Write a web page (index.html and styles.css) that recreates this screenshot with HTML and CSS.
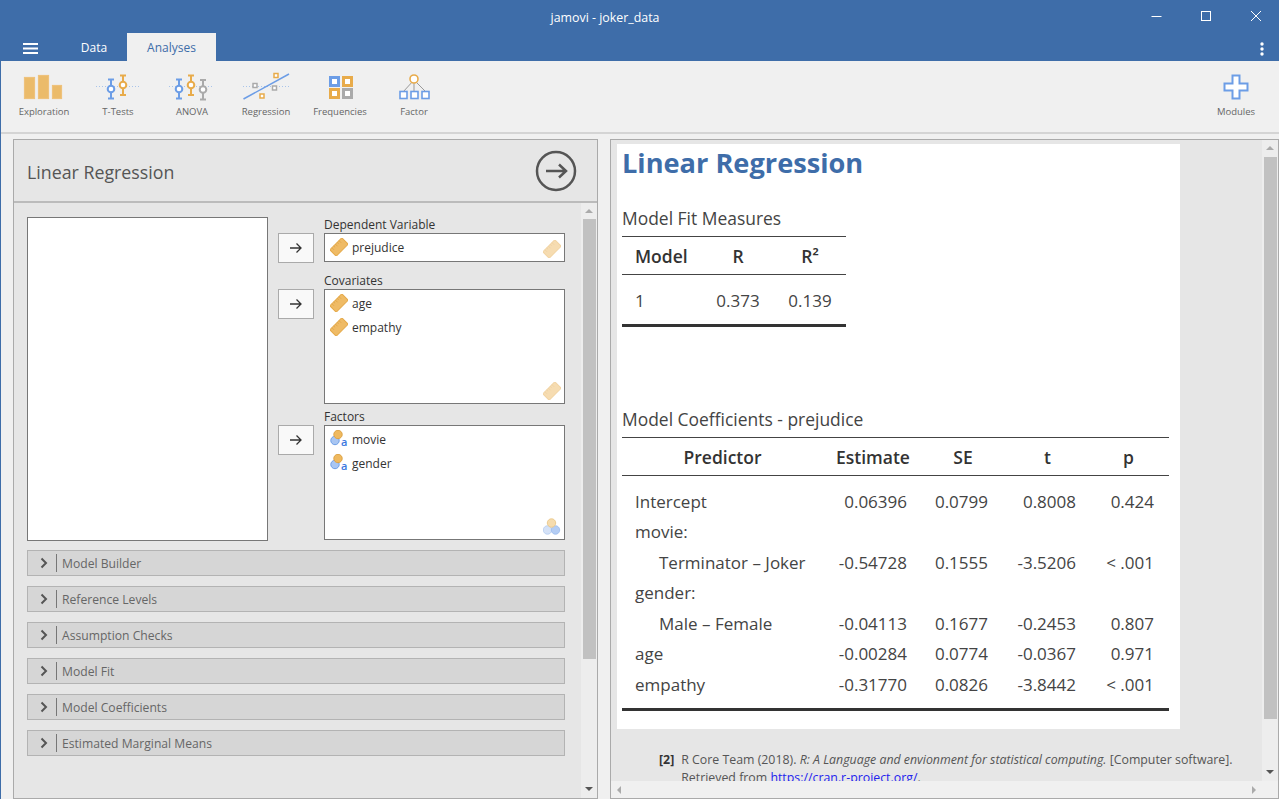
FILE: index.html
```html
<!DOCTYPE html>
<html lang="en">
<head>
    <meta charset="UTF-8">
    <title>jamovi - joker_data</title>
    <link rel="stylesheet" href="styles.css">
</head>
<body>
    <svg class="defs" width="0" height="0">
        <symbol id="ruler" viewBox="0 0 18 18">
            <g transform="rotate(-45 9 9)">
                <rect x="0.5" y="4.5" width="17" height="9" fill="#efbb66" stroke="#e5a948"/>
                <path d="M3.5 4.5v3M6 4.5v2M8.5 4.500v3M11 4.5v2M13.5 4.5v3" stroke="#d99b3a" stroke-width="0.6" fill="none"/>
            </g>
        </symbol>
        <symbol id="nominal" viewBox="0 0 18 18">
            <circle cx="5" cy="10.5" r="4.2" fill="#a9c6f2" stroke="#6f9fe6"/>
            <circle cx="8" cy="4.5" r="4.2" fill="#efb95f" stroke="#dda345"/>
            <text x="11" y="16" class="nominal-a">a</text>
        </symbol>
        <symbol id="nominal-faded" viewBox="0 0 18 18">
            <circle cx="4.5" cy="12" r="4.2" fill="#d5e2f7" stroke="#bcd2f3"/>
            <circle cx="12.5" cy="12" r="4.2" fill="#b4cdf4" stroke="#a3c1f0"/>
            <circle cx="8.5" cy="5" r="4.2" fill="#f6dcae" stroke="#eccb90"/>
        </symbol>
        <symbol id="arrow" viewBox="0 0 14 12">
            <path d="M1 6h11M7.5 1.500L12 6l-4.500 4.500" fill="none" stroke="#333" stroke-width="1.300"/>
        </symbol>
        <symbol id="chevron" viewBox="0 0 8 12">
            <path d="M1.500 1.500L6 6l-4.500 4.500" fill="none" stroke="#555" stroke-width="2"/>
        </symbol>
    </svg>

    <header class="titlebar">
        <div class="app-title">jamovi - joker_data</div>
        <div class="win-controls">
            <svg width="150" height="33" viewBox="0 0 150 33">
                <path d="M22.500 16.500h10" stroke="#fff" fill="none"/>
                <rect x="72.500" y="11.500" width="9" height="9" stroke="#fff" fill="none"/>
                <path d="M122 11l10 10M132 11l-10 10" stroke="#fff" fill="none"/>
            </svg>
        </div>
    </header>

    <nav class="tabbar">
        <svg class="hamburger" width="15" height="11" viewBox="0 0 15 11">
            <path d="M0 1h15M0 5.500h15M0 10h15" stroke="#fff" stroke-width="2"/>
        </svg>
        <div class="tab">Data</div>
        <div class="tab tab-active">Analyses</div>
        <svg class="dots" width="4" height="14" viewBox="0 0 4 14">
            <circle cx="2" cy="2" r="1.700" fill="#fff"/>
            <circle cx="2" cy="7" r="1.700" fill="#fff"/>
            <circle cx="2" cy="12" r="1.700" fill="#fff"/>
        </svg>
    </nav>

    <div class="ribbon">
        <div class="tool">
            <svg width="60" height="30" viewBox="0 0 60 30">
                <g fill="#ebbb6a" stroke="#eec27c" stroke-width="1.200">
                    <rect x="10.500" y="6.500" width="10" height="21"/>
                    <rect x="24.500" y="4.500" width="10" height="23"/>
                    <rect x="38.500" y="14.500" width="9" height="13"/>
                </g>
            </svg>
            <span>Exploration</span>
        </div>
        <div class="tool">
            <svg width="60" height="30" viewBox="0 0 60 30">
                <path d="M8 15.500h45" stroke="#a9c4ea" stroke-dasharray="1 2" fill="none"/>
                <g fill="#fff" stroke-width="2">
                    <g stroke="#6c9de6">
                        <path d="M23 8v20M20 8.500h6M20 27.500h6" fill="none"/>
                        <circle cx="23" cy="18" r="3.300"/>
                    </g>
                    <g stroke="#e8ab4a">
                        <path d="M35 4.500v20M32 4.500h6M32 24h6" fill="none"/>
                        <circle cx="35" cy="14" r="3.300"/>
                    </g>
                </g>
            </svg>
            <span>T-Tests</span>
        </div>
        <div class="tool">
            <svg width="60" height="30" viewBox="0 0 60 30">
                <path d="M7 15.500h45" stroke="#a9c4ea" stroke-dasharray="1 2" fill="none"/>
                <g fill="#fff" stroke-width="2">
                    <g stroke="#6c9de6">
                        <path d="M17 8v20M14 8.500h6M14 27.500h6" fill="none"/>
                        <circle cx="17" cy="18" r="3.300"/>
                    </g>
                    <g stroke="#e8ab4a">
                        <path d="M29 4.500v20M26 4.500h6M26 24h6" fill="none"/>
                        <circle cx="29" cy="14" r="3.300"/>
                    </g>
                    <g stroke="#aaa">
                        <path d="M41 9v20M38 9h6M38 28.500h6" fill="none"/>
                        <circle cx="41" cy="18.500" r="3.300"/>
                    </g>
                </g>
            </svg>
            <span>ANOVA</span>
        </div>
        <div class="tool">
            <svg width="60" height="30" viewBox="0 0 60 30">
                <path d="M7 15.500h47" stroke="#a9c4ea" stroke-dasharray="1 2" fill="none"/>
                <path d="M7.500 28L53 3" stroke="#6c9de6" stroke-width="1.500" fill="none"/>
                <g fill="#fff" stroke-width="1.500">
                    <rect x="17" y="12.500" width="4" height="4" stroke="#aaa"/>
                    <rect x="36.500" y="15" width="4" height="4" stroke="#aaa"/>
                    <rect x="38" y="2.500" width="4" height="4" stroke="#e8ab4a"/>
                    <rect x="24" y="23" width="4" height="4" stroke="#e8ab4a"/>
                </g>
            </svg>
            <span>Regression</span>
        </div>
        <div class="tool">
            <svg width="60" height="30" viewBox="0 0 60 30">
                <g fill="#fff" stroke-width="3">
                    <rect x="20.500" y="6.500" width="8" height="8" stroke="#6c9de6"/>
                    <rect x="33.500" y="6.500" width="8" height="8" stroke="#e8ab4a"/>
                    <rect x="20.500" y="18.500" width="8" height="8" stroke="#e8ab4a"/>
                    <rect x="33.500" y="18.500" width="8" height="8" stroke="#aaa"/>
                </g>
            </svg>
            <span>Frequencies</span>
        </div>
        <div class="tool">
            <svg width="60" height="30" viewBox="0 0 60 30">
                <path d="M30 9L19 21M30 9v12M30 9l12 12" stroke="#999" fill="none"/>
                <circle cx="30" cy="8" r="4" fill="#fff" stroke="#e8ab4a" stroke-width="1.600"/>
                <g fill="#fff" stroke="#6c9de6" stroke-width="1.600">
                    <rect x="16" y="20.500" width="7" height="7"/>
                    <rect x="27" y="20.500" width="7" height="7"/>
                    <rect x="38" y="20.500" width="7" height="7"/>
                </g>
            </svg>
            <span>Factor</span>
        </div>
        <div class="tool tool-end">
            <svg width="60" height="30" viewBox="0 0 60 30">
                <path d="M26.500 4.500h7v8h8v7h-8v8h-7v-8h-8v-7h8z" fill="#fff" stroke="#6c9de6" stroke-width="2"/>
            </svg>
            <span>Modules</span>
        </div>
    </div>

    <main class="workspace">
        <section class="options">
            <div class="options-head">
                <h2>Linear Regression</h2>
                <svg class="run-arrow" width="42" height="42" viewBox="0 0 42 42">
                    <circle cx="21" cy="21" r="19" fill="none" stroke="#555" stroke-width="2.500"/>
                    <path d="M11 21h20M24 14.500L31 21l-7 6.500" fill="none" stroke="#555" stroke-width="2.500"/>
                </svg>
            </div>
            <div class="options-body">
                <div class="options-scroll">
                    <div class="var-picker">
                        <div class="var-source"></div>
                        <div class="var-targets">
                            <div class="var-row var-row-first">
                                <button class="move"><svg width="14" height="12"><use href="#arrow"/></svg></button>
                                <div class="var-group">
                                    <label>Dependent Variable</label>
                                    <div class="var-box var-box-single">
                                        <div class="var-item"><svg width="18" height="18"><use href="#ruler"/></svg>prejudice</div>
                                        <svg class="hint hint-ruler" width="18" height="18"><use href="#ruler"/></svg>
                                    </div>
                                </div>
                            </div>
                            <div class="var-row">
                                <button class="move"><svg width="14" height="12"><use href="#arrow"/></svg></button>
                                <div class="var-group">
                                    <label>Covariates</label>
                                    <div class="var-box var-box-multi">
                                        <div class="var-item"><svg width="18" height="18"><use href="#ruler"/></svg>age</div>
                                        <div class="var-item"><svg width="18" height="18"><use href="#ruler"/></svg>empathy</div>
                                        <svg class="hint hint-ruler" width="18" height="18"><use href="#ruler"/></svg>
                                    </div>
                                </div>
                            </div>
                            <div class="var-row">
                                <button class="move"><svg width="14" height="12"><use href="#arrow"/></svg></button>
                                <div class="var-group">
                                    <label>Factors</label>
                                    <div class="var-box var-box-multi">
                                        <div class="var-item"><svg width="18" height="18"><use href="#nominal"/></svg>movie</div>
                                        <div class="var-item"><svg width="18" height="18"><use href="#nominal"/></svg>gender</div>
                                        <svg class="hint" width="18" height="18"><use href="#nominal-faded"/></svg>
                                    </div>
                                </div>
                            </div>
                        </div>
                    </div>
                    <div class="section-bar"><svg width="8" height="12"><use href="#chevron"/></svg><span>Model Builder</span></div>
                    <div class="section-bar"><svg width="8" height="12"><use href="#chevron"/></svg><span>Reference Levels</span></div>
                    <div class="section-bar"><svg width="8" height="12"><use href="#chevron"/></svg><span>Assumption Checks</span></div>
                    <div class="section-bar"><svg width="8" height="12"><use href="#chevron"/></svg><span>Model Fit</span></div>
                    <div class="section-bar"><svg width="8" height="12"><use href="#chevron"/></svg><span>Model Coefficients</span></div>
                    <div class="section-bar"><svg width="8" height="12"><use href="#chevron"/></svg><span>Estimated Marginal Means</span></div>
                </div>
                <div class="vscroll vscroll-options">
                    <i class="arrow-up"></i>
                    <div class="thumb"></div>
                    <i class="arrow-down"></i>
                </div>
            </div>
        </section>

        <section class="results">
            <div class="results-top">
                <div class="results-view">
                    <div class="paper">
                        <h1>Linear Regression</h1>
                        <h3 class="fit-title">Model Fit Measures</h3>
                        <table class="fit-table">
                            <thead>
                                <tr><th class="left">Model</th><th>R</th><th>R²</th></tr>
                            </thead>
                            <tbody>
                                <tr><td class="left">1</td><td>0.373</td><td>0.139</td></tr>
                            </tbody>
                        </table>
                        <h3 class="coef-title">Model Coefficients - prejudice</h3>
                        <table class="coef-table">
                            <colgroup>
                                <col class="c-pred"><col class="c-est"><col class="c-se"><col class="c-t"><col class="c-p">
                            </colgroup>
                            <thead>
                                <tr><th>Predictor</th><th>Estimate</th><th>SE</th><th>t</th><th>p</th></tr>
                            </thead>
                            <tbody>
                                <tr><td>Intercept</td><td>0.06396</td><td>0.0799</td><td>0.8008</td><td>0.424</td></tr>
                                <tr><td>movie:</td><td></td><td></td><td></td><td></td></tr>
                                <tr><td class="indent">Terminator – Joker</td><td>-0.54728</td><td>0.1555</td><td>-3.5206</td><td>&lt; .001</td></tr>
                                <tr><td>gender:</td><td></td><td></td><td></td><td></td></tr>
                                <tr><td class="indent">Male – Female</td><td>-0.04113</td><td>0.1677</td><td>-0.2453</td><td>0.807</td></tr>
                                <tr><td>age</td><td>-0.00284</td><td>0.0774</td><td>-0.0367</td><td>0.971</td></tr>
                                <tr><td>empathy</td><td>-0.31770</td><td>0.0826</td><td>-3.8442</td><td>&lt; .001</td></tr>
                            </tbody>
                        </table>
                    </div>
                    <div class="reference">
                        <b>[2]</b>
                        <p>R Core Team (2018). <em>R: A Language and envionment for statistical computing.</em> [Computer software]. Retrieved from <a href="#">https://cran.r-project.org/</a>.</p>
                    </div>
                </div>
                <div class="vscroll vscroll-results">
                    <i class="arrow-up"></i>
                    <div class="thumb"></div>
                    <i class="arrow-down"></i>
                </div>
            </div>
            <div class="hscroll">
                <i class="arrow-left"></i>
                <i class="arrow-right"></i>
            </div>
        </section>
    </main>
</body>
</html>
```

FILE: styles.css
```css
html, body {
    margin: 0;
    height: 100%;
}

body {
    width: 1279px;
    height: 799px;
    overflow: hidden;
    background-color: #f0f0f0;
    font-family: "Open Sans", "Noto Sans", sans-serif;
    color: #333;
    display: flex;
    flex-direction: column;
    border-left: 1px solid #3e6da9;
    box-sizing: border-box;
}

.defs {
    position: absolute;
}

.nominal-a {
    font-size: 11px;
    font-weight: 600;
    fill: #3b78e0;
}

/* title and tabs */
.titlebar {
    height: 33px;
    background-color: #3e6da9;
    display: flex;
    color: white;
    margin-left: -1px;
}

.app-title {
    flex: 1;
    padding-left: 81px;
    text-align: center;
    font-size: 12.4px;
    line-height: 35px;
}

.win-controls {
    width: 150px;
}

.tabbar {
    height: 28px;
    background-color: #3e6da9;
    display: flex;
    align-items: stretch;
    margin-left: -1px;
}

.hamburger {
    margin: 10px 16px 0 23px;
}

.tab {
    width: 66px;
    padding-left: 7px;
    text-align: center;
    color: white;
    font-size: 12px;
    line-height: 29px;
}

.tab-active {
    width: 89px;
    padding-left: 0;
    background-color: #f0f0f0;
    color: #3e6da9;
}

.dots {
    margin: 9px 15px 0 auto;
}

/* ribbon */
.ribbon {
    height: 73px;
    display: flex;
    padding-left: 6px;
    border-bottom: 2px solid #d4d4d4;
    box-sizing: border-box;
}

.tool {
    width: 74px;
    display: flex;
    flex-direction: column;
    align-items: center;
    padding-top: 10px;
    font-size: 9.5px;
    color: #666;
}

.tool span {
    line-height: 14px;
    margin-top: 4px;
}

.tool-end {
    margin-left: auto;
    margin-right: 6px;
}

/* main area */
.workspace {
    flex: 1;
    display: flex;
    min-height: 0;
    padding: 5px 0 0 12px;
}

.options {
    width: 585px;
    border: 1px solid #aaa;
    background-color: #e6e6e6;
    display: flex;
    flex-direction: column;
    box-sizing: border-box;
}

.options-head {
    height: 61px;
    border-bottom: 2px solid #bbb;
    display: flex;
    align-items: center;
    justify-content: space-between;
    padding: 0 20px 0 13px;
    flex-shrink: 0;
}

.options-head h2 {
    margin: 0;
    padding-top: 2px;
    font-size: 17.8px;
    font-weight: 400;
    color: #555;
}

.options-body {
    flex: 1;
    display: flex;
    min-height: 0;
}

.options-scroll {
    flex: 1;
    padding: 14px 16px 0 13px;
}

.var-picker {
    display: flex;
    gap: 10px;
    margin-bottom: 9px;
}

.var-source {
    width: 241px;
    height: 324px;
    background-color: white;
    border: 1px solid #777;
    box-sizing: border-box;
}

.var-targets {
    flex: 1;
    display: flex;
    flex-direction: column;
    gap: 5px;
}

.var-row {
    display: flex;
    gap: 10px;
}

.var-row-first {
    margin-bottom: 5px;
}

.move {
    width: 36px;
    height: 30px;
    margin-top: 16px;
    padding: 0;
    background-color: #f9f9f9;
    border: 1px solid #aaa;
    display: flex;
    align-items: center;
    justify-content: center;
}

.var-group {
    flex: 1;
}

.var-group label {
    display: block;
    height: 16px;
    font-size: 12px;
    line-height: 16px;
    color: #333;
}

.var-box {
    position: relative;
    background-color: white;
    border: 1px solid #777;
    box-sizing: border-box;
    padding-top: 1px;
}

.var-box-single {
    height: 29px;
}

.var-box-multi {
    height: 115px;
}

.var-item {
    height: 24px;
    display: flex;
    align-items: center;
    gap: 3px;
    padding-left: 5px;
    font-size: 12px;
    color: #333;
}

.var-item svg {
    margin-right: 1px;
}

.hint {
    position: absolute;
    right: 3px;
    bottom: 3px;
}

.hint-ruler {
    opacity: 0.5;
}

.section-bar {
    height: 26px;
    margin-bottom: 10px;
    background-color: #d6d6d6;
    border: 1px solid #b3b3b3;
    box-sizing: border-box;
    display: flex;
    align-items: center;
    padding-left: 12px;
    font-size: 12.15px;
    color: #666;
}

.section-bar span {
    margin-left: 8px;
    padding-left: 5px;
    height: 18px;
    line-height: 20px;
    border-left: 1px solid #777;
}

/* scrollbars */
.vscroll {
    width: 16px;
    display: flex;
    flex-direction: column;
    align-items: center;
    background-color: #ededed;
    flex-shrink: 0;
}

.thumb {
    width: 13px;
    background-color: #c1c1c1;
}

.vscroll-options .thumb {
    height: 440px;
    margin-top: 6px;
}

.vscroll-results .thumb {
    height: 562px;
    margin-top: 7px;
}

.arrow-up, .arrow-down, .arrow-left, .arrow-right {
    display: block;
    width: 0;
    height: 0;
    border-style: solid;
    border-color: transparent;
}

.arrow-up {
    margin-top: 6px;
    border-width: 0 4px 4px;
    border-bottom-color: #aaa;
}

.arrow-down {
    margin-top: auto;
    margin-bottom: 7px;
    border-width: 4px 4px 0;
    border-top-color: #555;
}

.arrow-left {
    border-width: 4px 4px 4px 0;
    border-right-color: #aaa;
}

.arrow-right {
    border-width: 4px 0 4px 4px;
    border-left-color: #aaa;
}

/* results */
.results {
    margin-left: 12px;
    flex: 1;
    border: 1px solid #aaa;
    background-color: #e6e6e6;
    display: flex;
    flex-direction: column;
    min-height: 0;
    min-width: 0;
}

.results-top {
    flex: 1;
    display: flex;
    min-height: 0;
}

.results-view {
    flex: 1;
    overflow: hidden;
    min-width: 0;
}

.hscroll {
    height: 17px;
    background-color: #f0f0f0;
    display: flex;
    align-items: center;
    justify-content: space-between;
    padding: 0 22px 0 6px;
    flex-shrink: 0;
}

.paper {
    width: 563px;
    height: 585px;
    margin: 4px 0 0 6px;
    padding: 0 5px;
    box-sizing: border-box;
    background-color: white;
    overflow: hidden;
}

.paper h1 {
    margin: 0;
    height: 38px;
    font-size: 27.2px;
    font-weight: 700;
    line-height: 38px;
    color: #3e6da9;
}

.paper h3 {
    margin: 0;
    font-size: 17.45px;
    font-weight: 400;
    line-height: 24px;
    color: #444;
}

.paper .fit-title {
    margin-top: 24px;
    height: 30px;
}

.paper .coef-title {
    margin-top: 80px;
    height: 30px;
}

table {
    border-collapse: collapse;
    font-size: 17px;
    color: #444;
}

th {
    font-size: 17.5px;
    font-weight: 600;
    color: #333;
    height: 37px;
    padding: 0;
    border-top: 1px solid #444;
    border-bottom: 1px solid #444;
}

.fit-table {
    width: 224px;
    table-layout: fixed;
}

.fit-table td {
    height: 48px;
    text-align: center;
    padding: 1px 0 0;
    border-bottom: 3px solid #333;
}

.fit-table .left {
    width: 67px;
    text-align: left;
    padding-left: 13px;
}

.coef-table {
    width: 547px;
    table-layout: fixed;
}

.coef-table th:first-child {
    padding-right: 4px;
}

.c-pred { width: 205px; }
.c-est { width: 92px; }
.c-se { width: 88px; }
.c-t { width: 81px; }
.c-p { width: 81px; }

.coef-table td {
    height: 30.5px;
    padding: 0;
    text-align: right;
}

.coef-table tbody tr:first-child td {
    padding-top: 10px;
}

.coef-table tbody tr:last-child td {
    padding-bottom: 8px;
    border-bottom: 3px solid #333;
}

.coef-table td:nth-child(1) { text-align: left; padding-left: 13px; }
.coef-table td:nth-child(2) { padding-right: 12px; }
.coef-table td:nth-child(3) { padding-right: 19px; }
.coef-table td:nth-child(4) { padding-right: 12px; }
.coef-table td:nth-child(5) { padding-right: 15px; }

.coef-table td.indent {
    padding-left: 37px;
}

.reference {
    display: flex;
    gap: 7px;
    margin: 22px 0 0 48px;
    width: 575px;
    font-size: 12.35px;
    line-height: 18px;
    color: #555;
}

.reference b {
    color: #333;
}

.reference p {
    margin: 0;
}

.reference a {
    color: #2222ee;
}
```
